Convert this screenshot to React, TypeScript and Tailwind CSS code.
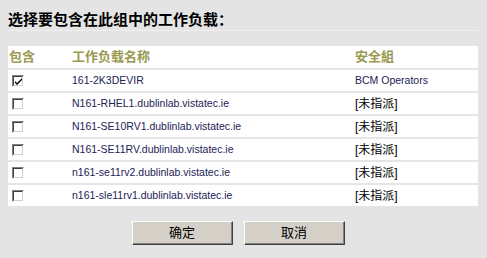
import React from 'react';

// Workload rows shown in the selection table
const workloads = [
    { name: '161-2K3DEVIR', group: 'BCM Operators', checked: true },
    { name: 'N161-RHEL1.dublinlab.vistatec.ie', group: '', checked: false },
    { name: 'N161-SE10RV1.dublinlab.vistatec.ie', group: '', checked: false },
    { name: 'N161-SE11RV.dublinlab.vistatec.ie', group: '', checked: false },
    { name: 'n161-se11rv2.dublinlab.vistatec.ie', group: '', checked: false },
    { name: 'n161-sle11rv1.dublinlab.vistatec.ie', group: '', checked: false },
];

function ClassicCheckbox({ checked }: { checked: boolean }) {
    return (
        <div className="w-[12px] h-[12px] border-t border-l border-[#808080] border-r border-b border-r-white border-b-white">
            <div className="w-full h-full border-t border-l border-[#404040] border-r border-b border-r-[#d4d0c8] border-b-[#d4d0c8] bg-white relative">
                {checked && (
                    <svg width="8" height="8" viewBox="0 0 8 8" className="absolute left-[1px] top-[1px]">
                        <path d="M0 3 L2 5 L7 0 L7 2 L2 7 L0 5 Z" fill="#000" />
                    </svg>
                )}
            </div>
        </div>
    );
}

function ClassicButton({ label }: { label: string }) {
    return (
        <button className="w-[101px] h-[24px] bg-[#d4d0c8] border-t border-l border-white border-r border-b border-r-[#404040] border-b-[#404040] p-0">
            <div className="w-full h-full border-r border-b border-[#808080] flex items-center justify-center text-[13px] text-black">
                {label}
            </div>
        </button>
    );
}

export default function App() {
    return (
        <div
            className="w-[487px] h-[258px] bg-[#e4e4e4] overflow-hidden"
            style={{ fontFamily: '"Liberation Sans", Arial, "Noto Sans CJK SC", sans-serif' }}
        >
            <h1 className="pl-[8px] pt-[12px] text-[15px] font-bold leading-[16px] text-black">
                选择要包含在此组中的工作负载：
            </h1>
            <div className="ml-[8px] mt-[2px] w-[470px] border-t border-[#efefef]" />

            <div className="ml-[8px] mt-[15px] w-[470px] bg-white">
                <div className="flex items-center h-[24px] border-b-2 border-[#e6e6e6] text-[13px] font-bold text-[#999950]">
                    <div className="w-[64px] pl-[1px]">包含</div>
                    <div className="w-[283px]">工作负载名称</div>
                    <div>安全組</div>
                </div>
                {workloads.map((w, i) => (
                    <div
                        key={w.name}
                        className={
                            i === workloads.length - 1
                                ? 'flex items-center h-[21px] text-[10.5px] text-[#222255]'
                                : 'flex items-center h-[23px] border-b-2 border-[#e6e6e6] text-[10.5px] text-[#222255]'
                        }
                    >
                        <div className="w-[64px] pl-[4px]">
                            <ClassicCheckbox checked={w.checked} />
                        </div>
                        <div className="w-[283px]">{w.name}</div>
                        <div className="text-black">
                            {w.group ? (
                                <span className="text-[#222255]">{w.group}</span>
                            ) : (
                                <span className="text-[12px]">[未指派]</span>
                            )}
                        </div>
                    </div>
                ))}
            </div>

            <div className="flex justify-center gap-[11px] pr-[10px] mt-[15px]">
                <ClassicButton label="确定" />
                <ClassicButton label="取消" />
            </div>
        </div>
    );
}
